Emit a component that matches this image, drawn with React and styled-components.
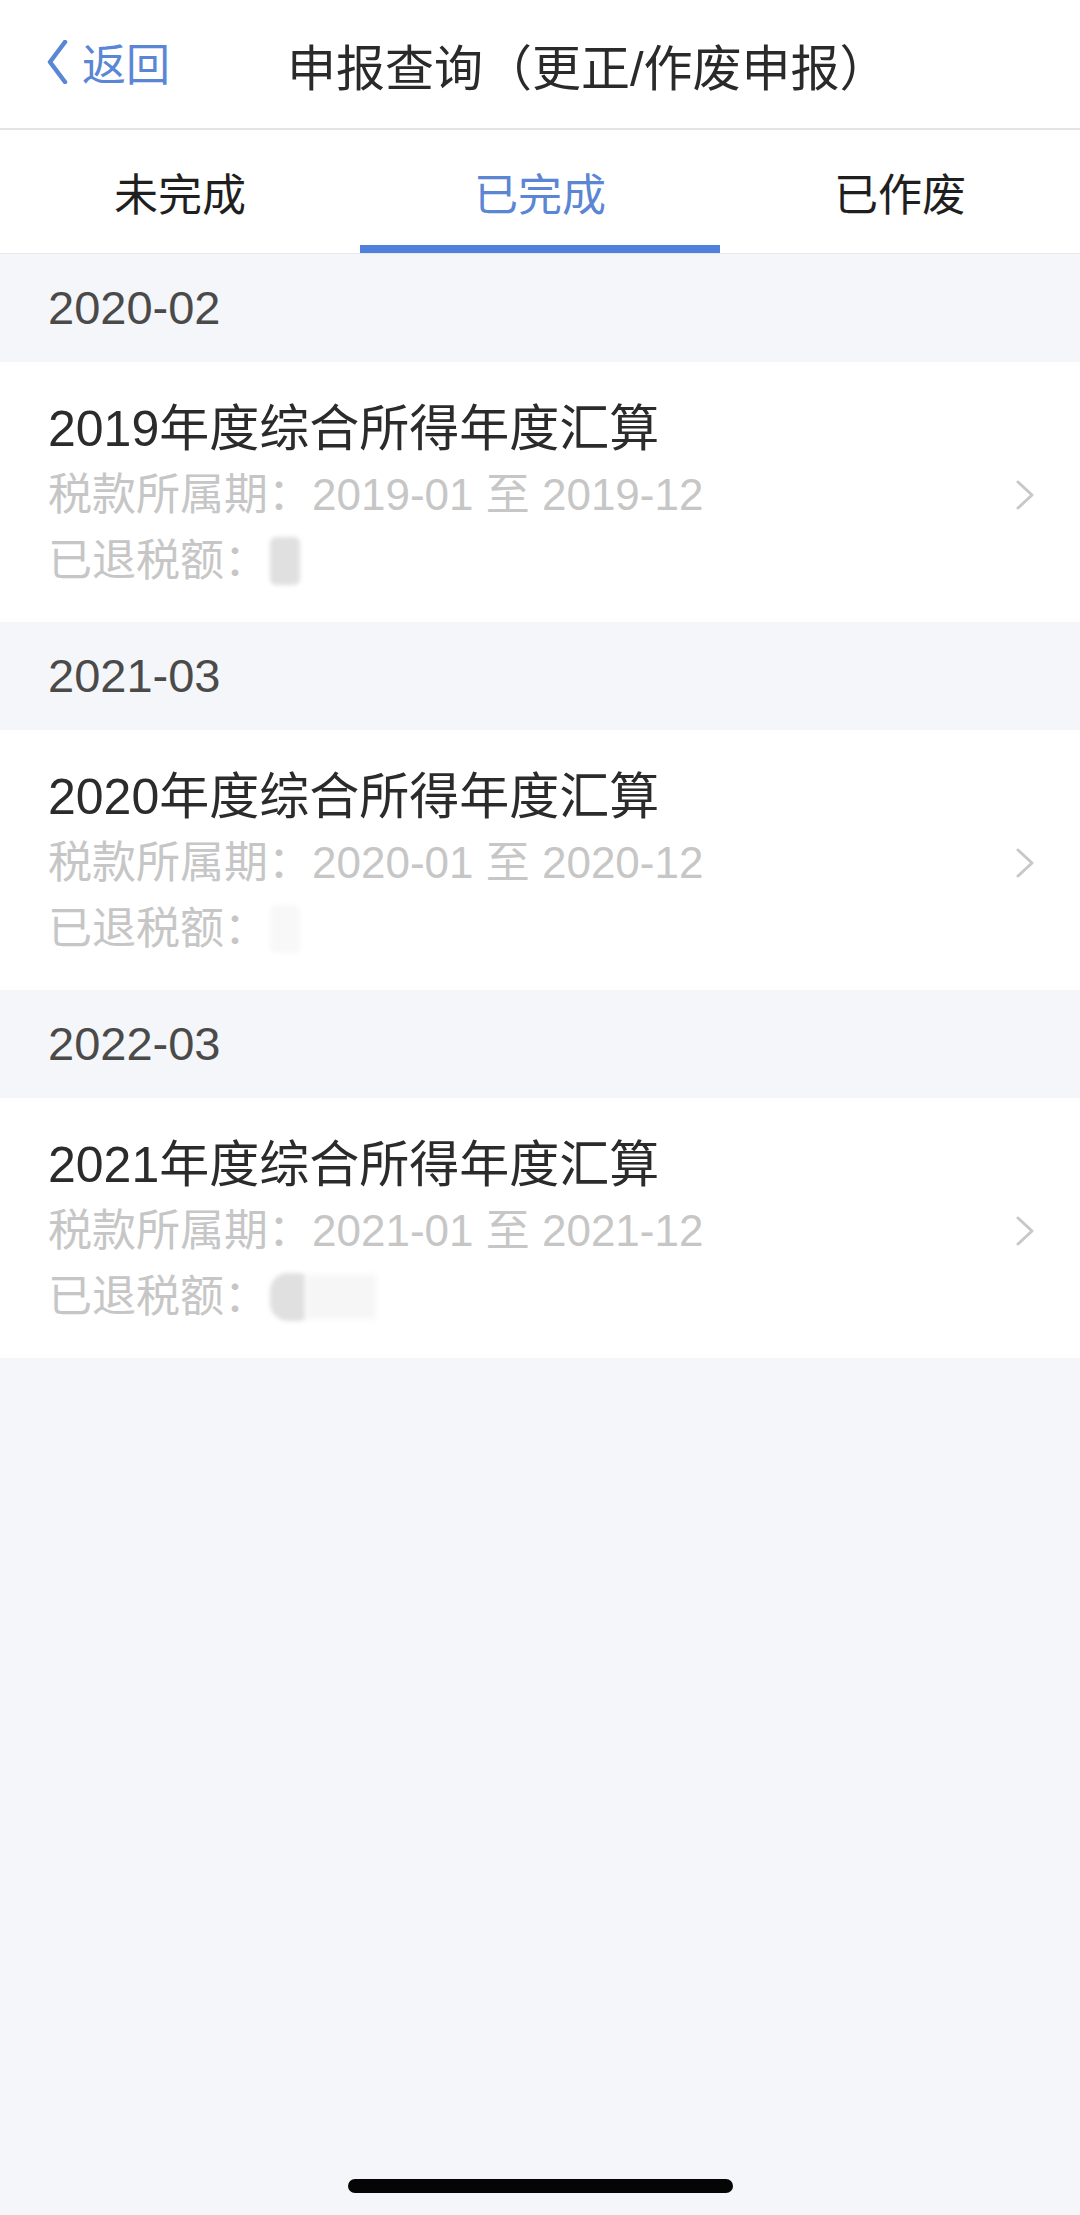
import React from 'react';
import styled, { createGlobalStyle } from 'styled-components';

const GlobalStyle = createGlobalStyle`
  body {
    margin: 0;
    background: #f5f6f9;
    font-family: "Liberation Sans", "Noto Sans CJK SC", sans-serif;
  }
`

const Page = styled.div`
  min-height: 2215px;
  display: flex;
  flex-direction: column;
  background: #f5f6f9;
`

const Header = styled.header`
  height: 128px;
  display: flex;
  align-items: center;
  padding-left: 46px;
  background: #fff;
  border-bottom: 2px solid #e4e4e6;
`

const BackButton = styled.div`
  display: flex;
  align-items: center;
  gap: 14px;
  color: #5a86d6;
  font-size: 44px;
  margin-top: -4px;
`

const Title = styled.h1`
  margin: 0 0 0 117px;
  font-size: 49px;
  font-weight: 400;
  color: #2a2a2a;
`

const TabBar = styled.nav`
  display: flex;
  background: #fff;
  border-bottom: 1px solid #e8e8ea;
`

const Tab = styled.div`
  flex: 1;
  height: 123px;
  display: flex;
  align-items: center;
  justify-content: center;
  font-size: 44px;
  color: ${p => (p.$active ? '#5b86d4' : '#1f1f1f')};
  border-bottom: 8px solid ${p => (p.$active ? '#4f80dc' : 'transparent')};
  box-sizing: border-box;
  padding-top: 8px;
`

const MonthLabel = styled.div`
  height: 108px;
  line-height: 108px;
  padding-left: 48px;
  font-size: 47px;
  color: #4a4a4a;
`

const Card = styled.div`
  display: flex;
  align-items: center;
  background: #fff;
  padding: 34px 45px 28px 48px;
`

const CardBody = styled.div`
  flex: 1;
`

const CardTitle = styled.div`
  font-size: 50px;
  line-height: 66px;
  color: #2b2b2b;
`

const Meta = styled.div`
  display: flex;
  align-items: center;
  font-size: 44px;
  line-height: 66px;
  color: #c6c6c6;
`

const Masked = styled.span`
  display: inline-block;
  height: 48px;
  width: ${p => (p.$variant === 'wide' ? '36px' : '30px')};
  border-radius: ${p => (p.$variant === 'wide' ? '18px 6px 6px 18px' : '6px')};
  background: ${p => (p.$variant === 'faint' ? '#f8f8f8' : '#e0e0e0')};
  filter: blur(2px);
  margin-left: 2px;
`

const MaskedTail = styled.span`
  display: inline-block;
  width: 70px;
  height: 44px;
  background: #f6f6f6;
  filter: blur(3px);
`

const Spacer = styled.div`
  flex: 1;
`

const HomeIndicator = styled.div`
  align-self: center;
  width: 385px;
  height: 14px;
  border-radius: 7px;
  background: #050505;
  margin-bottom: 22px;
`

const BackChevron = () => (
  <svg width="22" height="44" viewBox="0 0 22 44">
    <polyline points="19,2 4,22 19,42" fill="none" stroke="#5a86d6" strokeWidth="4.5" strokeLinecap="round" strokeLinejoin="round" />
  </svg>
)

const RowChevron = () => (
  <svg width="20" height="30" viewBox="0 0 20 30">
    <polyline points="3,2 17,15 3,28" fill="none" stroke="#c8c8c8" strokeWidth="3" strokeLinecap="round" strokeLinejoin="round" />
  </svg>
)

const records = [
  { month: '2020-02', year: 2019, mask: 'box' },
  { month: '2021-03', year: 2020, mask: 'faint' },
  { month: '2022-03', year: 2021, mask: 'wide' },
]

export default function App() {
  return (
    <>
      <GlobalStyle />
      <Page>
        <Header>
          <BackButton>
            <BackChevron />
            <span>返回</span>
          </BackButton>
          <Title>申报查询（更正/作废申报）</Title>
        </Header>
        <TabBar>
          <Tab>未完成</Tab>
          <Tab $active>已完成</Tab>
          <Tab>已作废</Tab>
        </TabBar>
        {records.map(r => (
          <React.Fragment key={r.month}>
            <MonthLabel>{r.month}</MonthLabel>
            <Card>
              <CardBody>
                <CardTitle>{r.year}年度综合所得年度汇算</CardTitle>
                <Meta>税款所属期：{r.year}-01 至 {r.year}-12</Meta>
                <Meta>
                  已退税额：
                  <Masked $variant={r.mask} />
                  {r.mask === 'wide' && <MaskedTail />}
                </Meta>
              </CardBody>
              <RowChevron />
            </Card>
          </React.Fragment>
        ))}
        <Spacer />
        <HomeIndicator />
      </Page>
    </>
  )
}
